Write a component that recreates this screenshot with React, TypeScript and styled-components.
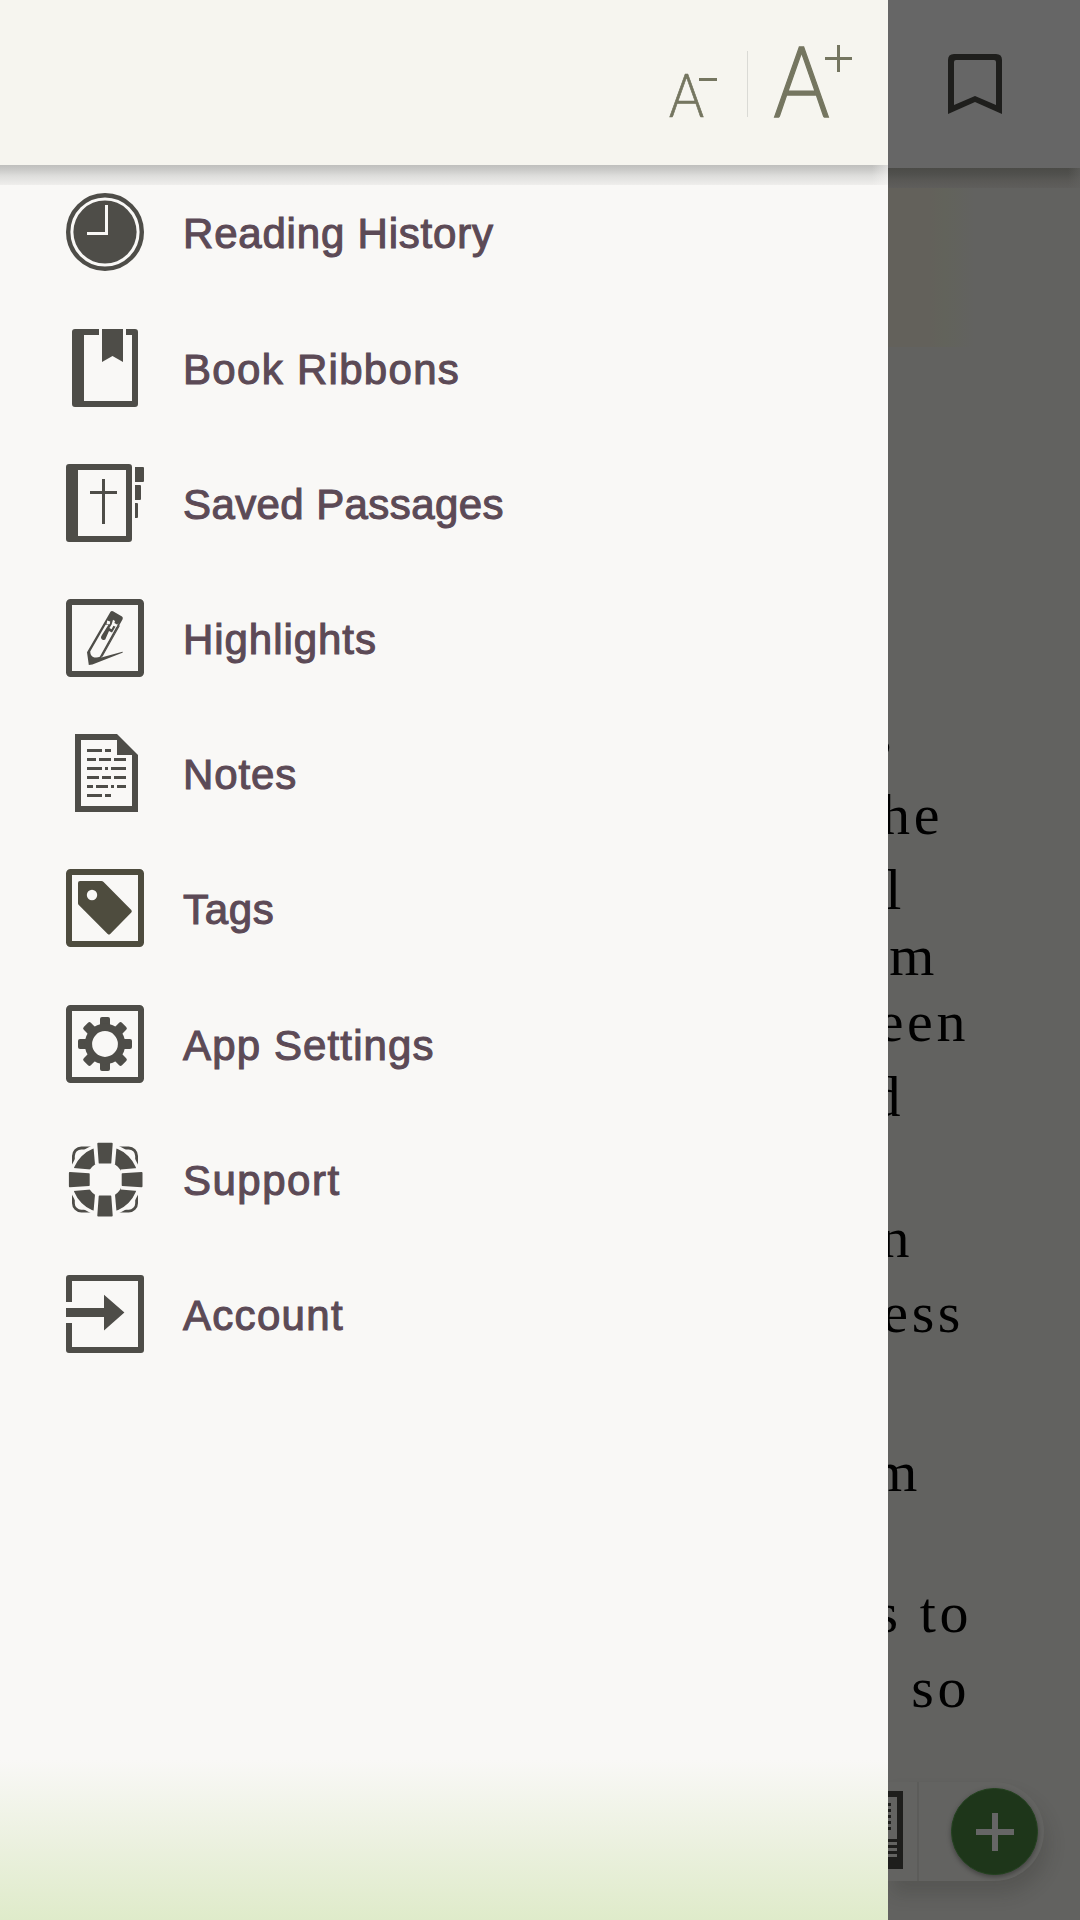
import React from "react";
import styled, { createGlobalStyle } from "styled-components";

const INK = "#4e4d48";
const PAPER = "#f9f8f6";

const GlobalStyle = createGlobalStyle`
  *, *::before, *::after { box-sizing: border-box; }
  html, body { margin: 0; padding: 0; background: #626260; }
  svg { display: block; flex: none; }
`;

const Screen = styled.div`
  display: flex;
  width: 1080px;
  height: 1920px;
  overflow: hidden;
  background: #626260;
`;

const Drawer = styled.aside`
  display: flex;
  flex-direction: column;
  width: 888px;
  flex: none;
  background: linear-gradient(to bottom, ${PAPER} 0, ${PAPER} 1760px, #ecf1e0 1840px, #dfebca 1920px);
  font-family: "Liberation Sans", Arial, sans-serif;
`;

const DrawerHeader = styled.header`
  display: flex;
  justify-content: flex-end;
  align-items: flex-end;
  height: 165px;
  flex: none;
  padding: 0 36px 48px 0;
  background: #f6f5ef;
`;

const SizeButton = styled.button`
  display: block;
  padding: 0;
  border: 0;
  background: none;
  color: #757660;
`;

const HeaderDivider = styled.span`
  width: 1px;
  height: 66px;
  margin: 0 26px 0 30px;
  background: #dadad5;
`;

const Menu = styled.nav`
  display: flex;
  flex-direction: column;
  flex: 1;
  background:
    linear-gradient(to right, rgba(249, 248, 246, 0) 872px, rgba(249, 248, 246, 0.5) 888px) 0 0 / 888px 20px no-repeat,
    linear-gradient(to bottom, #bfbfbd 0, #cbcbc9 5px, #dededc 11px, #efeeec 20px) 0 0 / 888px 20px no-repeat;
`;

const MenuItem = styled.a<{ $extra?: number }>`
  display: flex;
  align-items: flex-start;
  gap: 39px;
  height: 135px;
  flex: none;
  margin-top: ${(p) => p.$extra ?? 0}px;
  padding: 28px 0 0 66px;
`;

const Label = styled.span<{ $spacing: number }>`
  padding-top: 17px;
  font-size: 42px;
  line-height: 48px;
  letter-spacing: ${(p) => p.$spacing}px;
  color: #5c4a56;
  -webkit-text-stroke: 1.1px #5c4a56;
  white-space: nowrap;
`;

const Page = styled.main`
  display: flex;
  flex-direction: column;
  width: 192px;
  flex: none;
  overflow: hidden;
`;

const PageBar = styled.header`
  height: 168px;
  flex: none;
  padding: 54px 0 0 60px;
  background: #666666;
`;

const Reading = styled.article`
  flex: 1;
  min-height: 0;
  padding-top: 519px;
  background:
    linear-gradient(to right, rgba(98, 98, 96, 0) 180px, rgba(98, 98, 96, 0.6) 192px) 0 0 / 192px 20px no-repeat,
    linear-gradient(to bottom, #4b4b47 0, #50504d 6px, #595855 12px, #5f5e5c 20px) 0 0 / 192px 20px no-repeat,
    linear-gradient(to right, #63615b 0, #63615b 42px, #62635b 56px, #626260 86px) 0 0 / 192px 179px no-repeat,
    #626260;
`;

const Line = styled.p<{ $pitch: number; $right: number }>`
  display: flex;
  justify-content: flex-end;
  align-items: flex-end;
  height: ${(p) => p.$pitch}px;
  margin: 0;
  padding-right: ${(p) => p.$right}px;
  overflow: hidden;
  font-family: "Liberation Serif", "Times New Roman", serif;
  font-size: 58px;
  line-height: 60px;
  letter-spacing: 3.6px;
  color: #000;
  white-space: pre;
`;

const BottomBar = styled.footer`
  display: flex;
  align-items: center;
  width: 156px;
  height: 99px;
  flex: none;
  margin-bottom: 39px;
  border-radius: 0 50px 50px 0;
  background: #636361;
  box-shadow: 4px 13px 18px rgba(40, 40, 36, 0.2);
`;

const Thumb = styled.span`
  align-self: flex-start;
  padding-top: 9px;
`;

const BottomDivider = styled.span`
  width: 2px;
  height: 99px;
  margin: 0 32px 0 14px;
  background: #5c5c5a;
`;

const AddButton = styled.button`
  display: flex;
  align-items: center;
  justify-content: center;
  width: 87px;
  height: 87px;
  flex: none;
  padding: 0;
  border: 1px solid #23421f;
  border-radius: 50%;
  background: #1e361a;
  box-shadow: 0 2px 5px rgba(0, 0, 0, 0.35);
`;

const Icon = ({ children, color = INK }: { children: React.ReactNode; color?: string }) => (
  <svg width="78" height="78" viewBox="0 0 78 78" fill={color}>
    {children}
  </svg>
);

const Frame = ({ color = INK }: { color?: string }) => (
  <rect x="3" y="3" width="72" height="72" rx="1.5" fill="none" stroke={color} strokeWidth="6" strokeLinejoin="round" />
);

const HistoryIcon = () => (
  <Icon>
    <circle cx="39" cy="39" r="36.8" fill="none" stroke={INK} strokeWidth="4.4" />
    <circle cx="39" cy="39" r="31.6" />
    <path d="M40.5 12V40.5H21" fill="none" stroke={PAPER} strokeWidth="3" />
  </Icon>
);

const RibbonIcon = () => (
  <Icon>
    <path
      fillRule="evenodd"
      d="M9 0H33V6H18V72H66V6H60V0H69Q72 0 72 3V75Q72 78 69 78H9Q6 78 6 75V3Q6 0 9 0Z"
    />
    <path d="M36 0H57V33L46.5 27L36 33Z" />
  </Icon>
);

const PassagesIcon = () => (
  <Icon>
    <path
      fillRule="evenodd"
      d="M3 0H63Q66 0 66 3V75Q66 78 63 78H3Q0 78 0 75V3Q0 0 3 0ZM12 6V72H60V6Z"
    />
    <path d="M36 15H39V27H51V30H39V60H36V30H24V27H36Z" />
    <path d="M69 3H77Q78 3 78 4V17Q78 18 77 18H69ZM69 21H74Q75 21 75 22V35Q75 36 74 36H69ZM69 39H71Q72 39 72 40V53Q72 54 71 54H69Z" />
  </Icon>
);

const HighlightsIcon = () => (
  <Icon>
    <Frame />
    <path d="M44.5 12.8Q45.5 11.6 47 12.3L56 17.6Q57.4 18.6 56.6 20.2L35.3 58.4L56.4 52.8Q57.5 53 56.4 53.8L26.4 65.6L22.8 66L21 53.2Z" />
    <path d="M39.6 25.8L24.2 52.4Q24.4 57.6 28.4 58.4Q31.4 59 33.8 57.8L52.8 23.6L49 28.6L46 33.4L43 32L40 38.8Q39.4 42.2 36 40.4Q34 38.8 36 36L42.6 25.4Z" fill={PAPER} />
    <path d="M36 57.6L53.4 26.6" stroke={INK} strokeWidth="1.1" />
    <path d="M41.2 21.6L44.2 22.4L43.8 25.2L40.6 25Z M47 20.8L49 22L48.4 24L51.4 25.8L50.2 28L47.4 26.8L45.6 30.2L43.4 29L45.6 25.4Z" fill={PAPER} />
  </Icon>
);

const NOTE_ROWS = [
  [[21, 15], [39, 6]],
  [[21, 9], [33, 12], [48, 12]],
  [[21, 15], [39, 3], [45, 15]],
  [[21, 12], [36, 9], [48, 12]],
  [[21, 6], [30, 12], [45, 3], [51, 9]],
  [[21, 15], [39, 6]],
];

const NotesIcon = () => (
  <Icon>
    <path fillRule="evenodd" d="M9 0H51L72 21V78H9ZM15 6V72H66V21H51V6Z" />
    {NOTE_ROWS.map((row, i) =>
      row.map(([x, w]) => <rect key={`${i}-${x}`} x={x} y={15 + i * 9} width={w} height="3" />)
    )}
  </Icon>
);

const TAG = "#4e4c3e";
const TagsIcon = () => (
  <Icon color={TAG}>
    <Frame color={TAG} />
    <path d="M14 12H35.4Q36.6 12 37.6 13L65.3 41Q66.4 42.3 65.3 43.5L44.2 64.9Q43 66.2 41.7 64.9L12.8 36Q12 35.2 12 34.2V14Q12 12 14 12Z" />
    <circle cx="26" cy="26" r="5.2" fill={PAPER} />
  </Icon>
);

const SettingsIcon = () => (
  <Icon>
    <Frame />
    {[0, 45, 90, 135, 180, 225, 270, 315].map((a) => (
      <rect key={a} x="34" y="12" width="10" height="12" rx="2" transform={`rotate(${a} 39 39)`} />
    ))}
    <circle cx="39" cy="39" r="16.6" fill="none" stroke={INK} strokeWidth="7.4" />
  </Icon>
);

const SupportIcon = () => (
  <Icon>
    <g transform="translate(0 0.6)">
      <rect x="7.4" y="7.4" width="63.2" height="63.2" rx="8" fill="none" stroke={INK} strokeWidth="2.8" />
      <circle cx="39" cy="39" r="36.4" fill={PAPER} />
      <circle cx="39" cy="39" r="25.6" fill="none" stroke={INK} strokeWidth="15" />
      {[0, 90, 180, 270].map((a) => (
        <g key={a} transform={`${a % 180 ? "translate(0.7 0) " : ""}rotate(${a} 39 39)`}>
          <path d="M27 1L29 24H49L51 1Z" fill={PAPER} />
          <path d="M32.3 2.2H45.7Q46.8 2.2 46.7 3.2L45.3 22.4Q45.2 23 44.6 23H33.4Q32.8 23 32.7 22.4L31.3 3.2Q31.2 2.2 32.3 2.2Z" />
        </g>
      ))}
    </g>
  </Icon>
);

const AccountIcon = () => (
  <Icon>
    <path d="M3 0H75Q78 0 78 3V75Q78 78 75 78H3Q0 78 0 75V48H6V72H72V6H6V27H0V3Q0 0 3 0Z" />
    <path d="M0 33H38V19.7L58.4 37.6L38 55.4V42H0Z" />
  </Icon>
);

const ITEMS = [
  { label: "Reading History", icon: HistoryIcon, spacing: 0.8 },
  { label: "Book Ribbons", icon: RibbonIcon, spacing: 1.3, extra: 1 },
  { label: "Saved Passages", icon: PassagesIcon, spacing: 0.4 },
  { label: "Highlights", icon: HighlightsIcon, spacing: 0.95 },
  { label: "Notes", icon: NotesIcon, spacing: 0.9 },
  { label: "Tags", icon: TagsIcon, spacing: 0.7 },
  { label: "App Settings", icon: SettingsIcon, spacing: 1.13, extra: 1 },
  { label: "Support", icon: SupportIcon, spacing: 1.5 },
  { label: "Account", icon: AccountIcon, spacing: 1.3 },
];

const LINES = [
  { text: "s", pitch: 79, right: 185 },
  { text: "he", pitch: 79, right: 137 },
  { text: "l", pitch: 75, right: 175 },
  { text: "m", pitch: 66, right: 142 },
  { text: "een", pitch: 66, right: 111 },
  { text: "d", pitch: 75, right: 176 },
  { text: "n", pitch: 141, right: 167 },
  { text: "ess", pitch: 75, right: 116 },
  { text: "m", pitch: 159, right: 159 },
  { text: "s to", pitch: 141, right: 108 },
  { text: "so", pitch: 75, right: 110 },
];

const PageThumb = () => (
  <svg width="15" height="78" viewBox="63 0 15 78">
    <rect x="0" y="0" width="78" height="78" fill="#1e1e1c" />
    <rect x="6" y="6" width="66" height="42" fill="#636361" />
    {[12, 18, 24, 30, 36].map((y) => (
      <rect key={y} x="12" y={y} width="54" height="3" fill="#1e1e1c" />
    ))}
    {[51, 57, 63].map((y) => (
      <rect key={y} x="6" y={y} width="66" height="3" fill="#636361" />
    ))}
  </svg>
);

export default function App() {
  return (
    <>
      <GlobalStyle />
      <Screen>
        <Drawer>
          <DrawerHeader>
            <SizeButton aria-label="Decrease text size">
              <svg width="48" height="45" viewBox="0 0 48 45" fill="currentColor" overflow="visible">
                <text x="0" y="44.7" fontFamily="Lato, sans-serif" fontWeight="300" fontSize="62" stroke="currentColor" strokeWidth="0.7" textLength="35" lengthAdjust="spacingAndGlyphs">A</text>
                <rect x="30" y="6" width="18" height="3" />
              </svg>
            </SizeButton>
            <HeaderDivider />
            <SizeButton aria-label="Increase text size">
              <svg width="78" height="72" viewBox="0 0 78 72" fill="currentColor" overflow="visible">
                <text x="-0.5" y="71.5" fontFamily="Lato, sans-serif" fontWeight="300" fontSize="98.5" stroke="currentColor" strokeWidth="1.4" textLength="56" lengthAdjust="spacingAndGlyphs">A</text>
                <path d="M63 0H66V12H78V15H66V27H63V15H51V12H63Z" />
              </svg>
            </SizeButton>
          </DrawerHeader>
          <Menu>
            {ITEMS.map(({ label, icon: Glyph, spacing, extra }) => (
              <MenuItem key={label} $extra={extra}>
                <Glyph />
                <Label $spacing={spacing}>{label}</Label>
              </MenuItem>
            ))}
          </Menu>
        </Drawer>
        <Page>
          <PageBar>
            <svg width="54" height="60" viewBox="0 0 54 60" fill="#1e1e1c">
              <path fillRule="evenodd" d="M6 0H48Q54 0 54 6V60L27 48L0 60V6Q0 0 6 0ZM8 6Q6 6 6 8V51L27 42L48 51V8Q48 6 46 6Z" />
            </svg>
          </PageBar>
          <Reading>
            {LINES.map((l, i) => (
              <Line key={i} $pitch={l.pitch} $right={l.right}>
                <span>{l.text}</span>
              </Line>
            ))}
          </Reading>
          <BottomBar>
            <Thumb>
              <PageThumb />
            </Thumb>
            <BottomDivider />
            <AddButton aria-label="Add">
              <svg width="38" height="38" viewBox="0 0 38 38" fill="#666666">
                <path d="M16 0H22V16H38V22H22V38H16V22H0V16H16Z" />
              </svg>
            </AddButton>
          </BottomBar>
        </Page>
      </Screen>
    </>
  );
}
